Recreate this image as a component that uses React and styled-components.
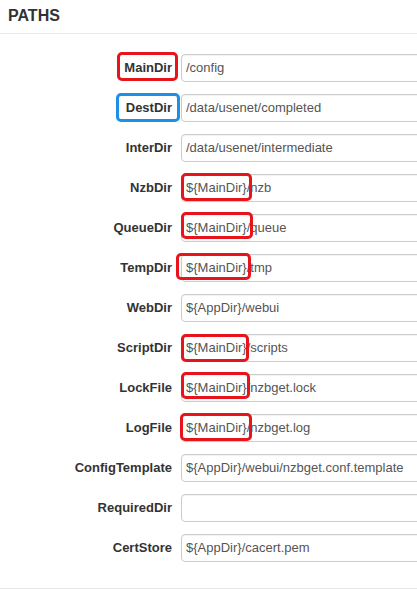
import React from "react";
import styled, { createGlobalStyle, css } from "styled-components";

const Global = createGlobalStyle`
  html, body { margin: 0; padding: 0; background: #fff; }
  body { font-family: "Liberation Sans", Arial, Helvetica, sans-serif; overflow: hidden; }
`;

const Page = styled.div`
  width: 417px;
  height: 591px;
  overflow: hidden;
  background: #fff;
`;

const Header = styled.h4`
  margin: 0;
  padding: 6px 8px 7px;
  font-size: 16px;
  line-height: 20px;
  font-weight: bold;
  color: #333;
  border-bottom: 1px solid #ebebeb;
`;

const Form = styled.div`
  display: flex;
  flex-direction: column;
  gap: 12px;
  padding: 20px 0 26px;
  border-bottom: 1px solid #e6e6e6;
`;

const Row = styled.div`
  display: grid;
  grid-template-columns: 172px 260px;
  column-gap: 9px;
  height: 28px;
`;

const Label = styled.div`
  text-align: right;
  font-size: 13px;
  font-weight: bold;
  line-height: 28px;
  color: #333;
  white-space: nowrap;
`;

const Field = styled.div`
  box-sizing: border-box;
  height: 28px;
  border: 1px solid #cccccc;
  border-radius: 4px;
  padding: 0 4px;
  font-size: 13px;
  line-height: 26px;
  color: #555;
  white-space: nowrap;
  background: #fff;
  box-shadow: inset 0 1px 1px rgba(0, 0, 0, 0.05);
`;

const Mark = styled.span`
  position: relative;
  display: inline-block;
  &::after {
    content: "";
    position: absolute;
    top: ${(p) => p.$t}px;
    bottom: ${(p) => p.$b}px;
    left: ${(p) => p.$l}px;
    right: ${(p) => p.$r}px;
    border: 3px solid ${(p) => (p.$blue ? "#1e8fe6" : "#e8141c")};
    border-radius: 5px;
    pointer-events: none;
  }
`;

const rows = [
  { name: "MainDir", value: "/config", label: { t: -2, b: 1, l: -7, r: -6 } },
  { name: "DestDir", value: "/data/usenet/completed", label: { t: -1, b: 0, l: -10, r: -8, blue: true } },
  { name: "InterDir", value: "/data/usenet/intermediate" },
  { name: "NzbDir", prefix: "${MainDir}", value: "/nzb", mark: { t: -2, b: 0, l: -5, r: -5 } },
  { name: "QueueDir", prefix: "${MainDir}", value: "/queue", mark: { t: -3, b: 2, l: -5, r: -6 } },
  { name: "TempDir", prefix: "${MainDir}", value: "/tmp", mark: { t: -2, b: 1, l: -10, r: -4 } },
  { name: "WebDir", value: "${AppDir}/webui" },
  { name: "ScriptDir", prefix: "${MainDir}", value: "/scripts", mark: { t: -1, b: -1, l: -5, r: -2 } },
  { name: "LockFile", prefix: "${MainDir}", value: "/nzbget.lock", mark: { t: -3, b: 2, l: -5, r: -3 } },
  { name: "LogFile", prefix: "${MainDir}", value: "/nzbget.log", mark: { t: -2, b: 0, l: -6, r: -5 } },
  { name: "ConfigTemplate", value: "${AppDir}/webui/nzbget.conf.template" },
  { name: "RequiredDir", value: "" },
  { name: "CertStore", value: "${AppDir}/cacert.pem" },
];

export default function App() {
  return (
    <Page>
      <Global />
      <Header>PATHS</Header>
      <Form>
        {rows.map((r) => (
          <Row key={r.name}>
            <Label>
              {r.label ? (
                <Mark $t={r.label.t} $b={r.label.b} $l={r.label.l} $r={r.label.r} $blue={r.label.blue}>
                  {r.name}
                </Mark>
              ) : (
                r.name
              )}
            </Label>
            <Field>
              {r.prefix && (
                <Mark $t={r.mark.t} $b={r.mark.b} $l={r.mark.l} $r={r.mark.r}>
                  {r.prefix}
                </Mark>
              )}
              {r.value}
            </Field>
          </Row>
        ))}
      </Form>
    </Page>
  );
}
